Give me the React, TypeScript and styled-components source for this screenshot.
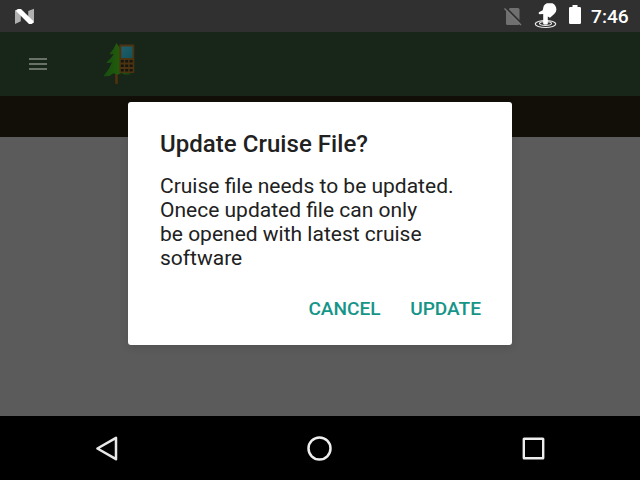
import React from 'react';
import styled, { createGlobalStyle } from 'styled-components';

const GlobalStyle = createGlobalStyle`
  * { box-sizing: border-box; }
  body { margin: 0; background: #000; }
  button { font: inherit; border: 0; background: none; padding: 0; }
  svg { display: block; flex: none; }
`;

const Screen = styled.div`
  position: relative;
  display: flex;
  flex-direction: column;
  width: 640px;
  height: 480px;
  overflow: hidden;
  background: #5b5b5b;
  font-family: Roboto, sans-serif;
`;

const StatusBar = styled.header`
  display: flex;
  align-items: center;
  height: 32px;
  padding: 0 11px 0 14px;
  background: #303030;
`;

const StatusIcons = styled.div`
  display: flex;
  align-items: center;
  margin-left: auto;
`;

const Spacer = styled.span<{ $width: number }>`
  width: ${({ $width }) => $width}px;
`;

const Clock = styled.span`
  width: 38px;
  margin-left: 9px;
  color: #fff;
  font-size: 19.2px;
  font-weight: 500;
  line-height: 33px;
  white-space: nowrap;
`;

const AppBar = styled.div`
  display: flex;
  align-items: center;
  gap: 54px;
  height: 64px;
  padding-left: 28px;
  background: #18261a;
`;

const Strip = styled.div`
  height: 41px;
  background: #120e08;
`;

const Content = styled.main`
  flex: 1;
`;

const NavBar = styled.nav`
  display: grid;
  grid-template-columns: 213px 213px 214px;
  height: 64px;
  background: #000;
`;

const NavButton = styled.button`
  display: flex;
  align-items: center;
  justify-content: center;
`;

const DialogLayer = styled.div`
  position: absolute;
  inset: 102px 128px auto;
`;

const Dialog = styled.section`
  display: flex;
  flex-direction: column;
  height: 243px;
  padding: 26px 31px 0 32px;
  border-radius: 3px;
  background: #fff;
  color: #212121;
  box-shadow: 0 2px 8px rgba(0, 0, 0, 0.12);
`;

const Title = styled.h1`
  margin: 0;
  font-size: 24px;
  font-weight: 500;
  line-height: 32px;
  letter-spacing: 0.04px;
  white-space: nowrap;
`;

const Message = styled.p`
  margin: 14px 0 0;
  font-size: 21px;
  line-height: 24px;
  white-space: pre;
`;

const Actions = styled.div`
  display: flex;
  justify-content: flex-end;
  gap: 29.5px;
  margin-top: 22px;
`;

const ActionButton = styled.button`
  color: #159588;
  font-size: 19.1px;
  font-weight: 500;
  line-height: 33px;
`;

const NotificationLogo = () => (
  <svg width="20" height="32" viewBox="14 0 20 32">
    <path d="M15 10l5.8 1v10.2L15 24zM34 8.8v14.1l-5.8-1V10.9z" fill="#b0b0b0" />
    <path d="M16 11q.2-1.9 2-2.1h3l12.5 12.3q.2 2-1.9 2.7H29z" fill="#fff" />
  </svg>
);

const NoSimIcon = () => (
  <svg width="20" height="32" viewBox="503 0 20 32">
    <path d="M506 11.5L510 8h8q1.5 0 1.5 1.5v14q0 1.5-1.5 1.5h-10.5q-1.5 0-1.5-1.5z" fill="#707070" />
    <path d="M505.5 7.3l17 17" stroke="#303030" strokeWidth="2" />
    <path d="M504.5 8.5l16.5 16.5" stroke="#777" strokeWidth="1.5" />
  </svg>
);

const TouchIcon = () => (
  <svg width="26" height="32" viewBox="532 0 26 32">
    <g fill="none" stroke="#e9e9e9">
      <ellipse cx="545.5" cy="24" rx="10.2" ry="3.5" strokeWidth="1.2" />
      <ellipse cx="545.5" cy="23.5" rx="6" ry="1.9" strokeWidth="1.1" />
    </g>
    <path d="M543.2 24V14l-3.6.2q-1.6-.4-.7-1.9l3.8-2 1-4.2q.8-2 3.2-2.9h5.5q3.8 1.5 4 6.5-.2 2.8-2.2 4.4l-4.2 3.7-2.2-1.3V24q-2.2 1-4.6 0z" fill="#fff" />
  </svg>
);

const BatteryIcon = () => (
  <svg width="14" height="32" viewBox="568 0 14 32">
    <path d="M572.5 5h5v2h2.2q1.3 0 1.3 1.3v14.4q0 1.3-1.3 1.3h-9.4q-1.3 0-1.3-1.3V8.3q0-1.3 1.3-1.3h2.2z" fill="#fff" />
  </svg>
);

const MenuIcon = () => (
  <svg width="20" height="14" viewBox="0 0 20 14">
    <path d="M1 2h18M1 7h18M1 12h18" stroke="#687269" strokeWidth="2" />
  </svg>
);

const TreeLogo = () => (
  <svg width="34" height="48" viewBox="102 40 34 48">
    <defs>
      <linearGradient id="foliage">
        <stop offset="0" stopColor="#174d10" />
        <stop offset=".6" stopColor="#235c0b" />
        <stop offset="1" stopColor="#123b10" />
      </linearGradient>
      <linearGradient id="display" x1="0" y1="0" x2="1" y2="1">
        <stop offset="0" stopColor="#225f6b" />
        <stop offset="1" stopColor="#10525b" />
      </linearGradient>
    </defs>
    <path d="M115.2 73h2.6v10.5q-1.5 1.2-2.6 0z" fill="#50320c" />
    <path d="M116.5 43q-2.3 5.7-7 11 2.3.5 4.4-.3-2.2 4.6-7.6 8.8 3 1.2 5.8-.2-2.6 7.2-8.6 13.8 5.8 1 10-2.8l4 1.5 4-1.9q4 2.7 9.5 1.5-3.5-5.7-5.5-12l-2-8.5z" fill="url(#foliage)" />
    <rect x="119.3" y="44.5" width="15" height="28.5" rx="1" fill="#4d3411" />
    <rect x="121.4" y="46.5" width="11" height="11.5" fill="url(#display)" />
    <g fill="#171510">
      <path d="M120.8 60h3v2.6h-3zm4.4 0h3v2.6h-3zm4.4 0h3v2.6h-3z" />
      <path d="M120.8 64.5h3v2.6h-3zm4.4 0h3v2.6h-3zm4.4 0h3v2.6h-3z" />
      <path d="M120.8 69h3v2.6h-3zm4.4 0h3v2.6h-3zm4.4 0h3v2.6h-3z" />
    </g>
  </svg>
);

const BackIcon = () => (
  <svg width="28" height="28" viewBox="93 434 28 28">
    <path d="M116 437.8v21.4l-18.6-10.7z" fill="none" stroke="#e8e8e8" strokeWidth="2.5" strokeLinejoin="round" />
  </svg>
);

const HomeIcon = () => (
  <svg width="28" height="28" viewBox="306 434 28 28">
    <circle cx="319.5" cy="448.5" r="11" fill="none" stroke="#eee" strokeWidth="2.5" />
  </svg>
);

const RecentsIcon = () => (
  <svg width="28" height="28" viewBox="519 434 28 28">
    <rect x="523.8" y="438.8" width="19.4" height="19.4" rx=".3" fill="none" stroke="#eee" strokeWidth="2.4" />
  </svg>
);

export default function App() {
  return (
    <>
      <GlobalStyle />
      <Screen>
        <StatusBar>
          <NotificationLogo />
          <StatusIcons>
            <NoSimIcon />
            <Spacer $width={9} />
            <TouchIcon />
            <Spacer $width={10} />
            <BatteryIcon />
            <Clock>7:46</Clock>
          </StatusIcons>
        </StatusBar>
        <AppBar>
          <MenuIcon />
          <TreeLogo />
        </AppBar>
        <Strip />
        <Content />
        <NavBar>
          <NavButton aria-label="Back"><BackIcon /></NavButton>
          <NavButton aria-label="Home"><HomeIcon /></NavButton>
          <NavButton aria-label="Recent apps"><RecentsIcon /></NavButton>
        </NavBar>
        <DialogLayer>
          <Dialog role="dialog" aria-labelledby="dialog-title">
            <Title id="dialog-title">Update Cruise File?</Title>
            <Message>{'Cruise file needs to be updated.\nOnece updated file can only\nbe opened with latest cruise\nsoftware'}</Message>
            <Actions>
              <ActionButton>CANCEL</ActionButton>
              <ActionButton>UPDATE</ActionButton>
            </Actions>
          </Dialog>
        </DialogLayer>
      </Screen>
    </>
  );
}
